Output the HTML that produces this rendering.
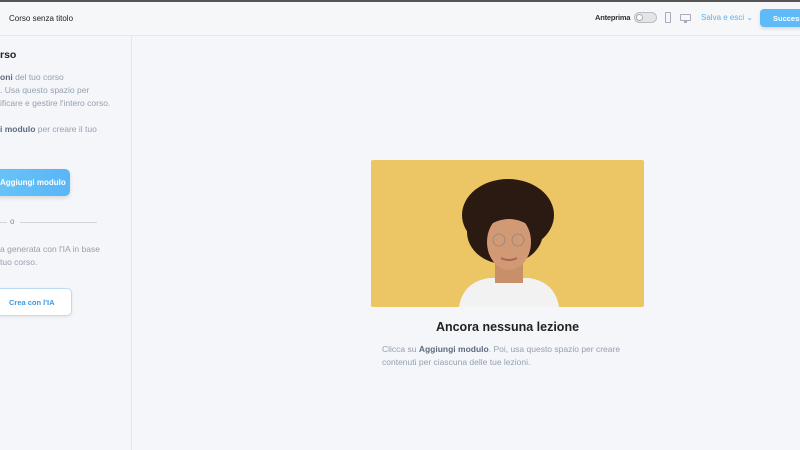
<!DOCTYPE html>
<html><head><meta charset="utf-8"><style>
*{margin:0;padding:0;box-sizing:border-box}
body{width:800px;height:450px;overflow:hidden;background:#f5f6f9;font-family:"Liberation Sans",sans-serif;position:relative}
.top{position:absolute;left:0;top:0;width:800px;height:2px;background:#555}
.hdr{position:absolute;left:0;top:2px;width:800px;height:34px;border-bottom:1px solid #e6e8ed;background:#f6f7f9}
.abs{position:absolute;white-space:nowrap}
.side{position:absolute;left:0;top:36px;width:132px;height:414px;border-right:1px solid #e4e6eb}
.g{color:#94a0b0;font-size:8.5px}
.b{color:#5c6b80;font-weight:bold}
</style></head><body>
<div class="top"></div>
<div class="hdr"></div>
<div class="abs" style="left:9px;top:14px;font-size:8px;color:#222">Corso senza titolo</div>
<div class="abs" style="left:595px;top:13px;font-size:7.5px;font-weight:bold;color:#333;letter-spacing:-0.2px">Anteprima</div>
<div class="abs" style="left:634px;top:12px;width:23px;height:11px;border-radius:6px;background:#e3e5e9;border:1px solid #b9bec6"><div style="position:absolute;left:1px;top:1px;width:7px;height:7px;border-radius:50%;background:#fff;border:1px solid #aaa"></div></div>
<div class="abs" style="left:665px;top:12px;width:6px;height:11px;border:1px solid #aab;border-radius:1px"></div>
<div class="abs" style="left:680px;top:14px;width:11px;height:7px;border:1px solid #aab;border-radius:1px"></div>
<div class="abs" style="left:684px;top:21px;width:3px;height:2px;background:#aab"></div>
<div class="abs" style="left:701px;top:13px;font-size:8px;color:#5cb0f0">Salva e esci ⌄</div>
<div class="abs" style="left:760px;top:9px;width:50px;height:18px;border-radius:4px;background:#5fbbf7;color:#fff;font-size:7.5px;font-weight:bold;padding:5px 0 0 13px;box-shadow:0 2px 3px rgba(0,0,0,.12)">Successivo</div>
<div class="side"></div>
<div class="abs" style="left:0;top:49px;font-size:10.5px;font-weight:bold;color:#222">rso</div>
<div class="abs g" style="left:0;top:72px"><span class="b">oni</span> del tuo corso</div>
<div class="abs g" style="left:0;top:85px">. Usa questo spazio per</div>
<div class="abs g" style="left:0;top:98px">ificare e gestire l'intero corso.</div>
<div class="abs g" style="left:0;top:124px"><span class="b">i modulo</span> per creare il tuo</div>
<div class="abs" style="left:-10px;top:169px;width:80px;height:27px;border-radius:5px;background:linear-gradient(90deg,#69c4f8,#5ab6f5);color:#fff;font-size:8px;font-weight:bold;padding:9px 0 0 10px;box-shadow:0 2px 4px rgba(0,0,0,.12)">Aggiungi modulo</div>
<div class="abs" style="left:0;top:222px;width:7px;height:1px;background:#d0d5dd"></div>
<div class="abs" style="left:10px;top:217px;font-size:8px;color:#888">o</div>
<div class="abs" style="left:20px;top:222px;width:77px;height:1px;background:#d0d5dd"></div>
<div class="abs g" style="left:0;top:244px">a generata con l'IA in base</div>
<div class="abs g" style="left:0;top:257px"> tuo corso.</div>
<div class="abs" style="left:-10px;top:288px;width:82px;height:28px;border-radius:5px;background:#fff;border:1px solid #bcdcf5;color:#3a9ae8;font-size:7.5px;font-weight:bold;padding:9px 0 0 18px;box-shadow:0 1px 3px rgba(0,0,0,.08)">Crea con l'IA</div>
<svg class="abs" style="left:371px;top:160px" width="273" height="147">
<rect width="273" height="147" rx="2" fill="#ecc665"/>
<path d="M88 147 Q92 122 118 118 L158 118 Q184 122 188 147Z" fill="#f2f2f2"/>
<rect x="124" y="95" width="28" height="28" fill="#c98e6a"/>
<ellipse cx="137" cy="55" rx="46" ry="36" fill="#2a1a12"/>
<ellipse cx="134" cy="72" rx="38" ry="32" fill="#2a1a12"/>
<ellipse cx="138" cy="82" rx="22" ry="28" fill="#d19a75"/>
<path d="M114 68 Q138 50 162 68 L162 60 Q138 40 114 60Z" fill="#2a1a12"/>
<circle cx="128" cy="80" r="6" fill="none" stroke="#9a8a80" stroke-width="1"/>
<circle cx="147" cy="80" r="6" fill="none" stroke="#9a8a80" stroke-width="1"/>
<path d="M130 98 Q138 102 146 98" stroke="#b0605a" stroke-width="2" fill="none"/>
</svg>
<div class="abs" style="left:0;top:320px;width:1015px;text-align:center;font-size:12.5px;font-weight:bold;color:#222">Ancora nessuna lezione</div>
<div class="abs g" style="left:382px;top:344px">Clicca su <span class="b">Aggiungi modulo</span>. Poi, usa questo spazio per creare</div>
<div class="abs g" style="left:382px;top:357px">contenuti per ciascuna delle tue lezioni.</div>
</body></html>
